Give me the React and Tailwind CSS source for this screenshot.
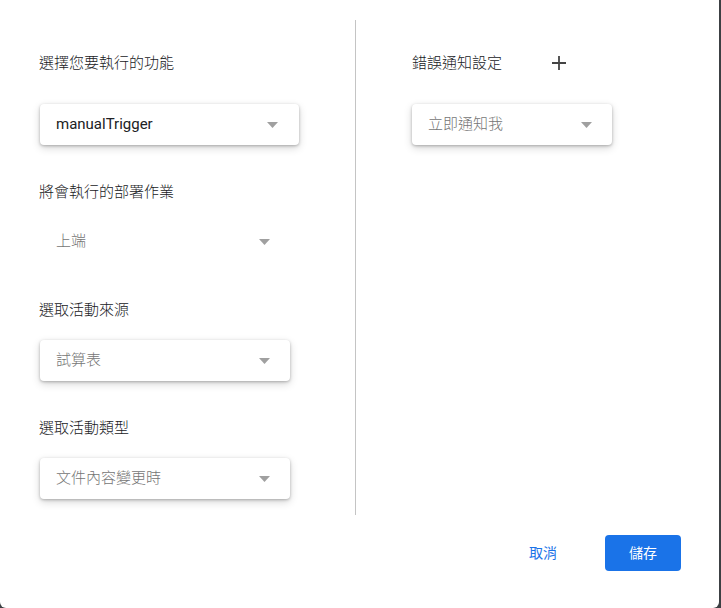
import React from "react";

const FONT = { fontFamily: "Roboto, 'Noto Sans CJK TC', 'Noto Sans', sans-serif" };

function Arrow() {
  return (
    <svg width="11" height="6" viewBox="0 0 11 6" className="shrink-0">
      <path d="M0 0 L11 0 L5.5 6 Z" fill="#a0a0a0" />
    </svg>
  );
}

function Select({ value, width, dark, flat, pr = "pr-[21px]" }) {
  return (
    <div
      className={`flex items-center justify-between h-[41px] pl-[16px] ${pr} rounded-[4px] bg-white ${
        flat ? "" : "shadow-[0_1px_3px_rgba(0,0,0,0.26),0_3px_8px_rgba(0,0,0,0.16)]"
      } ${width}`}
    >
      <span className={`text-[15px] ${dark ? "text-[#202124]" : "text-[#757575] font-light"}`}>{value}</span>
      <Arrow />
    </div>
  );
}

export default function App() {
  return (
    <div className="w-[721px] h-[608px] bg-[#3c4043]" style={FONT}>
      <div className="w-[719px] h-[608px] bg-white rounded-b-[6px] flex flex-col">
        <div className="flex pt-[20px] h-[515px]">
          {/* left column */}
          <div className="w-[355px] pl-[39px] pt-[33px] flex flex-col">
            <div className="h-5 leading-5 text-[15px] font-light text-[#202124]">選擇您要執行的功能</div>
            <div className="mt-[31px] pl-px">
              <Select value="manualTrigger" width="w-[259px]" dark />
            </div>
            <div className="mt-[37px] h-5 leading-5 text-[15px] font-light text-[#202124]">將會執行的部署作業</div>
            <div className="mt-[19px] pl-px">
              <Select value="上端" width="w-[252px]" flat pr="pr-[22px]" />
            </div>
            <div className="mt-[38px] h-5 leading-5 text-[15px] font-light text-[#202124]">選取活動來源</div>
            <div className="mt-[20px] pl-px">
              <Select value="試算表" width="w-[250px]" pr="pr-[20px]" />
            </div>
            <div className="mt-[37px] h-5 leading-5 text-[15px] font-light text-[#202124]">選取活動類型</div>
            <div className="mt-[20px] pl-px">
              <Select value="文件內容變更時" width="w-[250px]" pr="pr-[20px]" />
            </div>
          </div>

          {/* divider */}
          <div className="w-px bg-[#c4c4c4]" />

          {/* right column */}
          <div className="flex-1 pl-[56px] pt-[33px] flex flex-col">
            <div className="h-5 flex items-center">
              <span className="leading-5 text-[15px] font-light text-[#202124]">錯誤通知設定</span>
              <svg width="14" height="14" viewBox="0 0 14 14" className="ml-[50px]">
                <path d="M7 0 V14 M0 7 H14" stroke="#444" strokeWidth="1.8" />
              </svg>
            </div>
            <div className="mt-[31px]">
              <Select value="立即通知我" width="w-[200px]" pr="pr-[20px]" />
            </div>
          </div>
        </div>

        {/* actions */}
        <div className="flex justify-end items-center pr-[38px] mt-[20px]">
          <button className="w-[64px] h-9 text-[14px] text-[#1a73e8] mr-[30px]">取消</button>
          <button className="w-[76px] h-9 rounded-[4px] bg-[#1a73e8] text-white text-[14px]">儲存</button>
        </div>
      </div>
    </div>
  );
}
